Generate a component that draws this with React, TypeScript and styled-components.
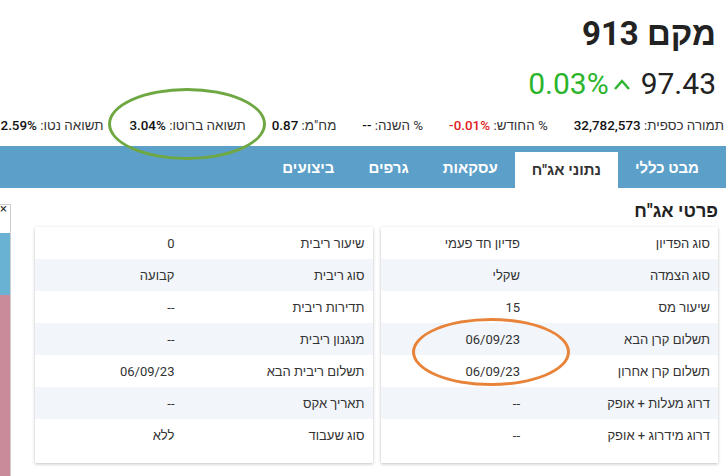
import React from 'react';
import styled, { createGlobalStyle } from 'styled-components';

const Global = createGlobalStyle`
  html, body { margin: 0; padding: 0; background: #fff; overflow: hidden; }
  body { font-family: Roboto, "Liberation Sans", Arial, sans-serif; color: #222; }
`;

const rightRows = [
  ['סוג הפדיון', 'פדיון חד פעמי'],
  ['סוג הצמדה', 'שקלי'],
  ['שיעור מס', '15'],
  ['תשלום קרן הבא', '06/09/23'],
  ['תשלום קרן אחרון', '06/09/23'],
  ['דרוג מעלות + אופק', '--'],
  ['דרוג מידרוג + אופק', '--'],
];
const leftRows = [
  ['שיעור ריבית', '0'],
  ['סוג ריבית', 'קבועה'],
  ['תדירות ריבית', '--'],
  ['מנגנון ריבית', '--'],
  ['תשלום ריבית הבא', '06/09/23'],
  ['תאריך אקס', '--'],
  ['סוג שעבוד', 'ללא'],
];

const App = () => (
  <Page dir="rtl">
    <Global />
    <Header>
      <Title>מקם 913</Title>
      <PriceRow>
        <Price>97.43</Price>
        <Change>
          <svg width="18" height="14" viewBox="0 0 18 14">
            <path d="M2 12 L9 4 L16 12" stroke="#2cb52c" strokeWidth="2.4" fill="none" />
          </svg>
          0.03%
        </Change>
      </PriceRow>
    </Header>
    <Stats>
      <Stat>תמורה כספית: <b>32,782,573</b></Stat>
      <Stat>% החודש: <Neg dir="ltr">-0.01%</Neg></Stat>
      <Stat>% השנה: <b>--</b></Stat>
      <Stat>מח"מ: <b>0.87</b></Stat>
      <Stat>תשואה ברוטו: <b>3.04%</b></Stat>
      <Stat>תשואה נטו: <b>2.59%</b></Stat>
    </Stats>
    <Tabs>
      <Tab>מבט כללי</Tab>
      <Tab $active>נתוני אג"ח</Tab>
      <Tab>עסקאות</Tab>
      <Tab>גרפים</Tab>
      <Tab>ביצועים</Tab>
    </Tabs>
    <Body>
      <Main>
        <SectionTitle>פרטי אג"ח</SectionTitle>
        <Cards>
          <Card>
            {rightRows.map(([l, v], i) => (
              <Row key={l} $alt={i % 2 === 1}><Label>{l}</Label><Value>{v}</Value></Row>
            ))}
          </Card>
          <Card>
            {leftRows.map(([l, v], i) => (
              <Row key={l} $alt={i % 2 === 1}><Label>{l}</Label><Value>{v}</Value></Row>
            ))}
          </Card>
        </Cards>
      </Main>
      <Ad>
        <Close>×</Close>
        <AdArt />
      </Ad>
    </Body>
    <Ellipse $c="#6fa843" style={{ left: 108, top: 88, width: 158, height: 72 }} />
    <Ellipse $c="#e8833a" style={{ left: 412, top: 318, width: 158, height: 68 }} />
  </Page>
);

const Page = styled.div`
  position: relative;
  width: 726px;
  height: 476px;
  overflow: hidden;
`;

const Header = styled.div`
  display: flex;
  flex-direction: column;
  align-items: flex-start;
  padding: 14px 10px 0 0;
`;

const Title = styled.div`
  font-size: 33px;
  font-weight: 700;
  line-height: 40px;
`;

const PriceRow = styled.div`
  display: flex;
  align-items: center;
  gap: 10px;
  margin-top: 12px;
  font-size: 30px;
  line-height: 36px;
`;

const Price = styled.span`
  color: #222;
`;

const Change = styled.span`
  color: #2cb52c;
  display: flex;
  align-items: center;
  gap: 4px;
`;

const Stats = styled.div`
  display: flex;
  gap: 26px;
  padding: 16px 2px 0 0;
  font-size: 13.4px;
  color: #333;
  white-space: nowrap;
  height: 28px;
  b { font-weight: 500; color: #111; }
`;

const Stat = styled.span``;

const Neg = styled.b`
  && { color: #e02020; }
`;

const Tabs = styled.div`
  display: flex;
  align-items: flex-end;
  height: 42px;
  background: #5ca0c9;
  padding-right: 10px;
`;

const Tab = styled.div<{ $active?: boolean }>`
  padding: 0 17px;
  height: ${p => (p.$active ? '36px' : '40px')};
  line-height: ${p => (p.$active ? '36px' : '40px')};
  font-size: 15px;
  font-weight: 700;
  color: ${p => (p.$active ? '#333' : '#fff')};
  background: ${p => (p.$active ? '#fff' : 'transparent')};
`;

const Body = styled.div`
  display: flex;
`;

const Main = styled.div`
  flex: 1;
  padding: 12px 8px 0 24px;
`;

const SectionTitle = styled.div`
  font-size: 18px;
  font-weight: 700;
  color: #222;
  margin-bottom: 5px;
`;

const Cards = styled.div`
  display: flex;
  gap: 8px;
`;

const Card = styled.div`
  flex: 1;
  background: #fff;
  box-shadow: 0 1px 3px rgba(0, 0, 0, 0.25);
  padding-bottom: 12px;
`;

const Row = styled.div<{ $alt?: boolean }>`
  display: flex;
  height: 32px;
  align-items: center;
  font-size: 13px;
  color: #333;
  background: ${p => (p.$alt ? '#f2f6fa' : '#fff')};
`;

const Label = styled.span`
  width: 190px;
  padding-right: 8px;
`;

const Value = styled.span``;

const Ad = styled.div`
  width: 10px;
  position: relative;
  border: 1px solid #ccc;
  border-left: none;
  margin-top: 16px;
  height: 280px;
`;

const Close = styled.span`
  position: absolute;
  top: -4px;
  left: 0;
  font-size: 13px;
  color: #333;
`;

const AdArt = styled.div`
  margin-top: 28px;
  height: 250px;
  background: linear-gradient(#6ab2d4 0 25%, #c98a9a 25% 100%);
`;

const Ellipse = styled.div<{ $c: string }>`
  position: absolute;
  border: 3.5px solid ${p => p.$c};
  border-radius: 50%;
  box-sizing: border-box;
`;

export default App;
